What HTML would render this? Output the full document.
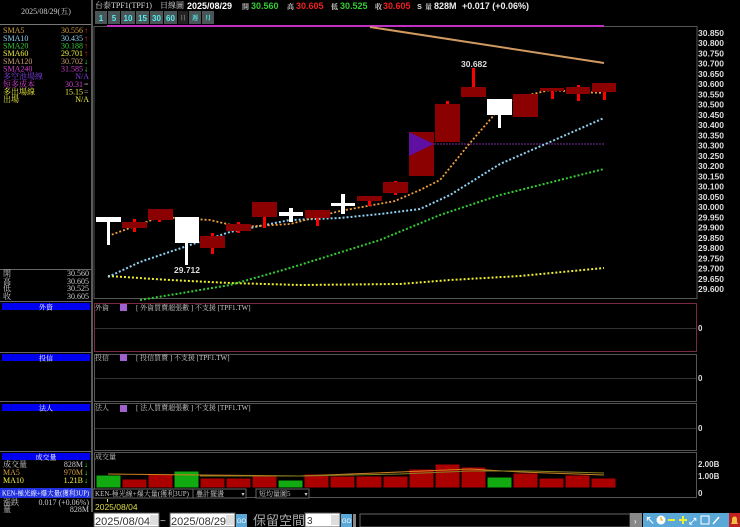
<!DOCTYPE html>
<html><head><meta charset="utf-8"><style>
html,body{margin:0;padding:0;background:#000;width:740px;height:527px;overflow:hidden}
svg{display:block}
text{font-family:"Liberation Serif","Noto Serif CJK SC","Noto Sans CJK TC",serif}
.s{font-family:"Liberation Sans","Noto Sans CJK TC",sans-serif}
</style></head><body>
<svg width="740" height="527" viewBox="0 0 740 527" xmlns="http://www.w3.org/2000/svg">
<rect width="740" height="527" fill="#000"/>
<rect x="91" y="0" width="2" height="512" fill="#5a5a5a"/>
<rect x="0" y="24" width="91" height="1" fill="#777"/>
<text x="46" y="14" font-size="8" fill="#ccc" text-anchor="middle">2025/08/29(五)</text>
<g font-size="8">
<text x="3" y="33" fill="#d4a040">SMA5</text><text x="83" y="33" fill="#d4a040" text-anchor="end">30.556</text><text x="84" y="33" fill="#f22">↑</text>
<text x="3" y="41" fill="#8fd0f0">SMA10</text><text x="83" y="41" fill="#8fd0f0" text-anchor="end">30.435</text><text x="84" y="41" fill="#f22">↑</text>
<text x="3" y="48.5" fill="#3c3">SMA20</text><text x="83" y="48.5" fill="#3c3" text-anchor="end">30.188</text><text x="84" y="48.5" fill="#f22">↑</text>
<text x="3" y="56" fill="#ee4">SMA60</text><text x="83" y="56" fill="#ee4" text-anchor="end">29.701</text><text x="84" y="56" fill="#f22">↑</text>
<text x="3" y="64" fill="#c9a070">SMA120</text><text x="83" y="64" fill="#c9a070" text-anchor="end">30.702</text><text x="84" y="64" fill="#3e3">↓</text>
<text x="3" y="71.5" fill="#d040d0">SMA240</text><text x="83" y="71.5" fill="#d040d0" text-anchor="end">31.585</text><text x="84" y="71.5" fill="#3e3">↓</text>
<text x="3" y="79" fill="#8040e0">多空池場線</text><text x="89" y="79" fill="#8040e0" text-anchor="end">N/A</text>
<text x="3" y="87" fill="#d040d0">短多成本</text><text x="83" y="87" fill="#d040d0" text-anchor="end">30.31</text><text x="84" y="87" fill="#aaa">=</text>
<text x="3" y="94.5" fill="#ee4">多出場線</text><text x="83" y="94.5" fill="#ee4" text-anchor="end">15.15</text><text x="84" y="94.5" fill="#aaa">=</text>
<text x="3" y="102" fill="#ee4">出場</text><text x="89" y="102" fill="#ee4" text-anchor="end">N/A</text>
</g>
<rect x="0" y="269" width="91" height="1" fill="#666"/>
<g font-size="8" fill="#ccc">
<text x="3" y="276">開</text><text x="89" y="276" text-anchor="end">30.560</text>
<text x="3" y="284">高</text><text x="89" y="284" text-anchor="end">30.605</text>
<text x="3" y="291">低</text><text x="89" y="291" text-anchor="end">30.525</text>
<text x="3" y="299">收</text><text x="89" y="299" text-anchor="end">30.605</text>
</g>
<rect x="0" y="301" width="91" height="1" fill="#666"/>
<rect x="2" y="303" width="88" height="7" fill="#0000f0"/><text x="46" y="309.5" font-size="7" fill="#fff" text-anchor="middle">外資</text>
<rect x="0" y="352" width="91" height="1" fill="#666"/>
<rect x="2" y="354" width="88" height="7" fill="#0000f0"/><text x="46" y="360.5" font-size="7" fill="#fff" text-anchor="middle">投信</text>
<rect x="0" y="401" width="91" height="1" fill="#666"/>
<rect x="2" y="404" width="88" height="7" fill="#0000f0"/><text x="46" y="410.5" font-size="7" fill="#fff" text-anchor="middle">法人</text>
<rect x="0" y="451" width="91" height="1" fill="#666"/>
<rect x="2" y="453" width="88" height="7" fill="#0000f0"/><text x="46" y="459.5" font-size="7" fill="#fff" text-anchor="middle">成交量</text>
<g font-size="8">
<text x="3" y="467" fill="#ccc">成交量</text><text x="83" y="467" fill="#ccc" text-anchor="end">828M</text><text x="84" y="467" fill="#3e3">↓</text>
<text x="3" y="475" fill="#d4a040">MA5</text><text x="83" y="475" fill="#d4a040" text-anchor="end">970M</text><text x="84" y="475" fill="#3e3">↓</text>
<text x="3" y="483" fill="#ee4">MA10</text><text x="83" y="483" fill="#ee4" text-anchor="end">1.21B</text><text x="84" y="483" fill="#3e3">↓</text>
</g>
<rect x="0" y="488" width="91" height="10" fill="#2030e0"/>
<text x="2" y="495.5" font-size="7" fill="#fff" textLength="87" lengthAdjust="spacingAndGlyphs">KEN-極光線+爆大量(獲利3UP)</text>
<g font-size="8" fill="#ccc">
<text x="3" y="505">漲跌</text><text x="89" y="505" text-anchor="end">0.017 (+0.06%)</text>
<text x="3" y="512">量</text><text x="89" y="512" text-anchor="end">828M</text>
</g>

<text x="95" y="8" font-size="8" fill="#ddd">台泰TPF1(TPF1)</text>
<text x="160" y="8" font-size="8" fill="#ddd">日線圖</text>
<g class="s" font-size="9" font-weight="bold">
<text x="187" y="9" fill="#fff" class="s">2025/08/29</text>
<text x="242" y="9" font-size="7" fill="#ccc">開</text>
<text x="251" y="9" fill="#3c3" class="s">30.560</text>
<text x="287" y="9" font-size="7" fill="#ccc">高</text>
<text x="296" y="9" fill="#e22" class="s">30.605</text>
<text x="331" y="9" font-size="7" fill="#ccc">低</text>
<text x="340" y="9" fill="#3c3" class="s">30.525</text>
<text x="375" y="9" font-size="7" fill="#ccc">收</text>
<text x="383" y="9" fill="#e22" class="s">30.605</text>
<text x="417" y="9" fill="#ccc" class="s">s</text>
<text x="425" y="9" font-size="7" fill="#ccc">量</text>
<text x="434" y="9" fill="#eee" class="s">828M</text>
<text x="462" y="9" fill="#eee" class="s">+0.017 (+0.06%)</text>
</g>
<g font-size="8" class="s" font-weight="bold" fill="#5ee">
<rect x="95" y="11" width="12" height="13" fill="#4a5558"/><text x="101" y="21" text-anchor="middle" class="s">1</text>
<rect x="108" y="11" width="12" height="13" fill="#4a5558"/><text x="114" y="21" text-anchor="middle" class="s">5</text>
<rect x="121" y="11" width="14" height="13" fill="#4a5558"/><text x="128" y="21" text-anchor="middle" class="s">10</text>
<rect x="136" y="11" width="13" height="13" fill="#4a5558"/><text x="142.5" y="21" text-anchor="middle" class="s">15</text>
<rect x="150" y="11" width="13" height="13" fill="#4a5558"/><text x="156.5" y="21" text-anchor="middle" class="s">30</text>
<rect x="164" y="11" width="13" height="13" fill="#4a5558"/><text x="170.5" y="21" text-anchor="middle" class="s">60</text>
<rect x="178" y="11" width="10" height="13" fill="#222"/><text x="183" y="20" font-size="6" fill="#777" text-anchor="middle">日</text>
<rect x="189" y="11" width="12" height="13" fill="#4a5558"/><text x="195" y="20" font-size="6" text-anchor="middle">週</text>
<rect x="202" y="11" width="12" height="13" fill="#4a5558"/><text x="208" y="20" font-size="6" text-anchor="middle">月</text>
</g>

<rect x="94" y="26.5" width="603" height="272" fill="none" stroke="#555" stroke-width="1"/>
<rect x="107" y="25" width="497" height="2" fill="#c030c0"/>
<g font-size="8.5" fill="#ddd" class="s" font-weight="bold">
<text x="698" y="36" class="s">30.850</text><text x="698" y="46.2" class="s">30.800</text><text x="698" y="56.5" class="s">30.750</text><text x="698" y="66.7" class="s">30.700</text><text x="698" y="77" class="s">30.650</text><text x="698" y="87.2" class="s">30.600</text><text x="698" y="97.4" class="s">30.550</text><text x="698" y="107.7" class="s">30.500</text><text x="698" y="117.9" class="s">30.450</text><text x="698" y="128.2" class="s">30.400</text><text x="698" y="138.4" class="s">30.350</text><text x="698" y="148.6" class="s">30.300</text><text x="698" y="158.9" class="s">30.250</text><text x="698" y="169.1" class="s">30.200</text><text x="698" y="179.4" class="s">30.150</text><text x="698" y="189.6" class="s">30.100</text><text x="698" y="199.8" class="s">30.050</text><text x="698" y="210.1" class="s">30.000</text><text x="698" y="220.3" class="s">29.950</text><text x="698" y="230.6" class="s">29.900</text><text x="698" y="240.8" class="s">29.850</text><text x="698" y="251" class="s">29.800</text><text x="698" y="261.3" class="s">29.750</text><text x="698" y="271.5" class="s">29.700</text><text x="698" y="281.8" class="s">29.650</text><text x="698" y="292" class="s">29.600</text>
</g>
<polyline points="370,27 604,63" fill="none" stroke="#d09a60" stroke-width="2"/>
<line x1="434" y1="144" x2="604" y2="144" stroke="#8030a0" stroke-width="1" stroke-dasharray="2,1"/>
<polyline points="108,276 170,280 230,283 300,285 400,284 450,280 520,276 604,268" fill="none" stroke="#ee3" stroke-width="2" stroke-dasharray="2,2"/>
<polyline points="140,300 230,285 290,268 380,240 440,215 500,195 560,180 604,169" fill="none" stroke="#3c3" stroke-width="2" stroke-dasharray="2,2"/>
<polyline points="108,277 140,262 190,245 230,232 290,220 340,218 380,214 420,209 450,195 500,164 550,142 604,118" fill="none" stroke="#8fd0f0" stroke-width="2" stroke-dasharray="2,2"/>
<polyline points="108,236 160,217 210,220 240,227 290,224 340,211 395,201 420,190 440,180 470,143 500,108 520,97 550,90 580,92 604,93" fill="none" stroke="#f0a040" stroke-width="1.8" stroke-dasharray="2,2"/>
<g fill="#8b0000">
<rect x="133" y="219" width="3" height="13" fill="#f00"/><rect x="122" y="222" width="25" height="6"/>
<rect x="158" y="218" width="3" height="4" fill="#f00"/><rect x="148" y="209" width="25" height="11"/>
<rect x="211" y="233" width="3" height="21" fill="#f00"/><rect x="200" y="236" width="25" height="12"/>
<rect x="237" y="222" width="3" height="11" fill="#f00"/><rect x="226" y="224" width="25" height="7"/>
<rect x="263" y="215" width="3" height="13" fill="#f00"/><rect x="252" y="202" width="25" height="15"/>
<rect x="316" y="215" width="3" height="11" fill="#f00"/><rect x="305" y="210" width="25" height="8"/>
<rect x="368" y="199" width="3" height="7" fill="#f00"/><rect x="357" y="196" width="25" height="5"/>
<rect x="394" y="181" width="3" height="14" fill="#f00"/><rect x="383" y="182" width="25" height="11"/>
<rect x="409" y="132" width="25" height="44"/>
<rect x="446" y="101" width="3" height="5" fill="#f00"/><rect x="435" y="104" width="25" height="38"/>
<rect x="472" y="68" width="3" height="22" fill="#f00"/><rect x="461" y="87" width="25" height="10"/>
<rect x="513" y="94" width="25" height="23"/>
<rect x="551" y="90" width="3" height="9" fill="#f00"/><rect x="540" y="88" width="24" height="3"/>
<rect x="577" y="85" width="3" height="16" fill="#f00"/><rect x="566" y="87" width="24" height="7"/>
<rect x="603" y="88" width="3" height="12" fill="#f00"/><rect x="592" y="83" width="24" height="9"/>
</g>
<polygon points="409,132 409,156 434,144" fill="#6010a0"/>
<g fill="#fff">
<rect x="96" y="217" width="25" height="5"/><rect x="107" y="217" width="3" height="28"/>
<rect x="175" y="217" width="24" height="26"/><rect x="185" y="240" width="3" height="25"/>
<rect x="279" y="212" width="24" height="4"/><rect x="289" y="208" width="4" height="14"/>
<rect x="331" y="203" width="24" height="3"/><rect x="341" y="194" width="4" height="20"/>
<rect x="487" y="99" width="25" height="16"/><rect x="498" y="113" width="3" height="15"/>
</g>
<text x="187" y="273" font-size="8.5" fill="#ddd" text-anchor="middle" class="s" font-weight="bold">29.712</text>
<text x="474" y="67" font-size="8.5" fill="#ddd" text-anchor="middle" class="s" font-weight="bold">30.682</text>

<rect x="94.5" y="303.5" width="602" height="48" fill="none" stroke="#7a2a40"/>
<line x1="95" y1="328.5" x2="696" y2="328.5" stroke="#333"/>
<rect x="94.5" y="354.5" width="602" height="47" fill="none" stroke="#555"/>
<line x1="95" y1="378.5" x2="696" y2="378.5" stroke="#333"/>
<rect x="94.5" y="403.5" width="602" height="47" fill="none" stroke="#555"/>
<line x1="95" y1="428.5" x2="696" y2="428.5" stroke="#333"/>
<g font-size="7" fill="#ccc">
<text x="95" y="310">外資</text><rect x="120" y="304" width="7" height="7" fill="#a060d0"/><text x="136" y="310">[ 外資買賣超張數 ] 不支援 [TPF1.TW]</text>
<text x="95" y="360">投信</text><rect x="120" y="354" width="7" height="7" fill="#a060d0"/><text x="136" y="360">[ 投信買賣 ] 不支援 [TPF1.TW]</text>
<text x="95" y="410">法人</text><rect x="120" y="405" width="7" height="7" fill="#a060d0"/><text x="136" y="410">[ 法人買賣超張數 ] 不支援 [TPF1.TW]</text>
<text x="95" y="459">成交量</text>
</g>
<g font-size="8" fill="#ddd" class="s" font-weight="bold">
<text x="698" y="331" class="s">0</text><text x="698" y="381" class="s">0</text><text x="698" y="431" class="s">0</text>
<text x="698" y="467" class="s">2.00B</text><text x="698" y="479" class="s">1.00B</text><text x="698" y="496" class="s">0</text>
</g>
<rect x="94.5" y="452.5" width="602" height="45" fill="none" stroke="#555"/>
<g stroke="#000" stroke-width="1">
<rect x="96" y="475" width="25" height="13" fill="#1a1"/>
<rect x="122" y="479" width="25" height="9" fill="#a00"/>
<rect x="148" y="474" width="25" height="14" fill="#a00"/>
<rect x="174" y="471" width="25" height="17" fill="#1a1"/>
<rect x="200" y="478" width="25" height="10" fill="#a00"/>
<rect x="226" y="478" width="25" height="10" fill="#a00"/>
<rect x="252" y="475" width="25" height="13" fill="#a00"/>
<rect x="278" y="480" width="25" height="8" fill="#1a1"/>
<rect x="304" y="474" width="25" height="14" fill="#a00"/>
<rect x="330" y="476" width="25" height="12" fill="#a00"/>
<rect x="356" y="476" width="26" height="12" fill="#a00"/>
<rect x="383" y="476" width="25" height="12" fill="#a00"/>
<rect x="409" y="469" width="25" height="19" fill="#a00"/>
<rect x="435" y="464" width="25" height="24" fill="#a00"/>
<rect x="461" y="467" width="25" height="21" fill="#a00"/>
<rect x="487" y="477" width="25" height="11" fill="#1a1"/>
<rect x="513" y="473" width="25" height="15" fill="#a00"/>
<rect x="539" y="478" width="25" height="10" fill="#a00"/>
<rect x="565" y="475" width="25" height="13" fill="#a00"/>
<rect x="591" y="478" width="25" height="10" fill="#a00"/>
</g>
<polyline points="108,474 200,475 300,476 400,472 470,469 520,472 604,475" fill="none" stroke="#d08020" stroke-width="1"/>
<polyline points="200,476 300,476 400,474 470,471 530,471 604,473" fill="none" stroke="#888020" stroke-width="1"/>
<rect x="93" y="489" width="100" height="9" fill="#000" stroke="#666"/>
<text x="95" y="496" font-size="7" fill="#ccc" textLength="94" lengthAdjust="spacingAndGlyphs">KEN-極光線+爆大量(獲利3UP)</text>
<rect x="193" y="489" width="53" height="9" fill="#000" stroke="#666"/><text x="196" y="496" font-size="7" fill="#ccc">疊計擺盪</text><text x="243" y="496" font-size="6" fill="#ccc" text-anchor="middle">▾</text>
<rect x="256" y="489" width="53" height="9" fill="#000" stroke="#666"/><text x="259" y="496" font-size="7" fill="#ccc">短均量圖5</text><text x="306" y="496" font-size="6" fill="#ccc" text-anchor="middle">▾</text>
<text x="95" y="510" font-size="8.5" fill="#dd4" class="s">2025/08/04</text>
<rect x="107" y="499" width="1" height="3" fill="#dd4"/>
<rect x="94" y="513" width="65" height="14" fill="#fff" stroke="#555"/>
<text x="95" y="525" font-size="11" fill="#333" class="s">2025/08/04</text>
<rect x="150" y="515" width="8" height="10" fill="#ddd"/>
<text x="160" y="524" font-size="10" fill="#ccc" class="s">~</text>
<rect x="170" y="513" width="65" height="14" fill="#fff" stroke="#555"/>
<text x="171" y="525" font-size="11" fill="#333" class="s">2025/08/29</text>
<rect x="226" y="515" width="8" height="10" fill="#ddd"/>
<rect x="236" y="514" width="11" height="13" fill="#5aa8d8"/><text x="241.5" y="523" font-size="6" fill="#fff" text-anchor="middle" class="s">GO</text>
<text x="253" y="525" font-size="13" fill="#aaa" class="s">保留空間</text>
<rect x="305" y="513" width="35" height="14" fill="#fff" stroke="#555"/>
<text x="307" y="524" font-size="10" fill="#333" class="s">3</text>
<rect x="331" y="515" width="8" height="10" fill="#ddd"/>
<rect x="341" y="514" width="11" height="13" fill="#5aa8d8"/><text x="346.5" y="523" font-size="6" fill="#fff" text-anchor="middle" class="s">GO</text>
<rect x="353" y="514" width="3" height="13" fill="#888"/>
<rect x="360" y="514" width="270" height="13" fill="#000" stroke="#666"/>
<rect x="630" y="513" width="12" height="14" fill="#888"/><text x="634" y="524" font-size="8" fill="#fff" class="s">›</text>
<rect x="643" y="513" width="86" height="14" fill="#5aa8d8"/>
<g font-size="10" fill="#fff" class="s" font-weight="bold">
<text x="645" y="524" class="s">↖</text>
<circle cx="661" cy="520" r="4.5" fill="#fff"/><path d="M661 517v3h2" stroke="#e90" fill="none"/>
<rect x="668" y="519" width="7" height="2" fill="#ee3"/>
<path d="M679 520h8M683 516v8" stroke="#ee3" stroke-width="2"/>
<text x="689" y="524" class="s" font-size="9">⤢</text>
<rect x="701" y="516" width="8" height="8" fill="none" stroke="#fff"/>
<path d="M713 524l6-7" stroke="#fff" stroke-width="1.5"/>
</g>
<rect x="729" y="513" width="11" height="14" fill="#c02020"/>
<path d="M731 524h7l-1-2v-3a2.5 2.5 0 0 0-5 0v3z" fill="#f0c040"/>
</svg>
</body></html>
